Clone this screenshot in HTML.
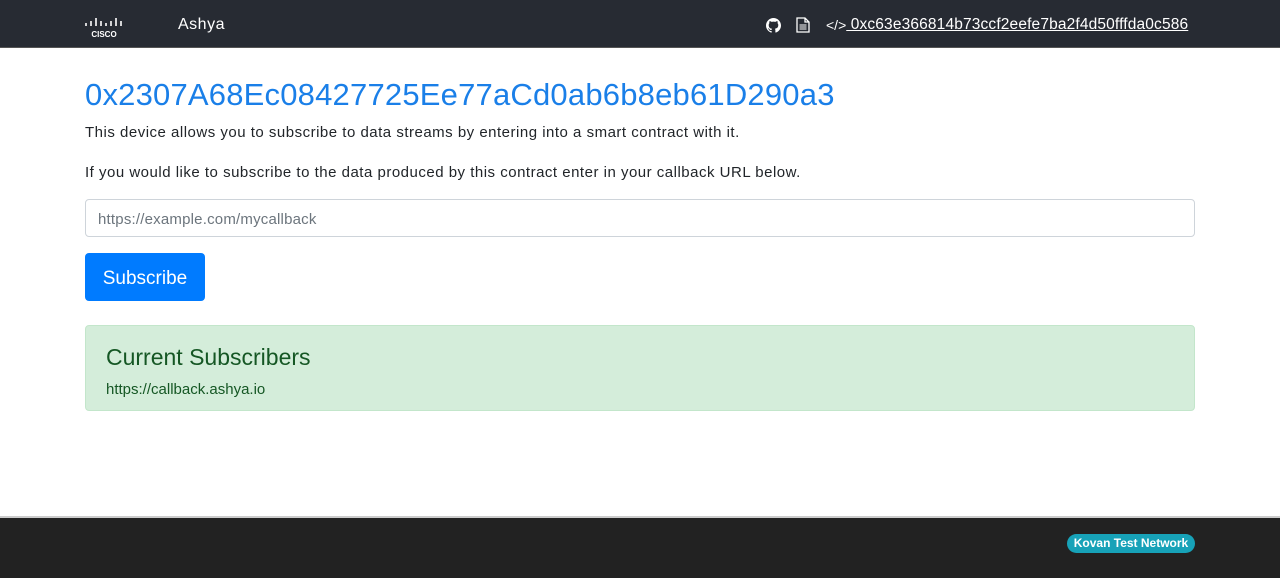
<!DOCTYPE html>
<html><head><meta charset="utf-8"><style>
*{box-sizing:border-box;margin:0;padding:0}
body{width:1280px;height:578px;overflow:hidden;font-family:"Liberation Sans",sans-serif;background:#fff;color:#212529;position:relative}
.nav{position:absolute;left:0;top:0;width:1280px;height:48px;background:#272b33;border-bottom:1px solid #555}
.brand{position:absolute;left:178px;top:16px;color:#fff;font-size:16px;letter-spacing:.5px}
.right{position:absolute;left:766px;top:16px;color:#fff;font-size:15.5px;display:flex;align-items:center}
h1{position:absolute;left:85px;top:77px;font-size:31px;font-weight:normal;color:#1a7fe8;letter-spacing:.2px}
p{position:absolute;left:85px;font-size:15px;color:#212529;letter-spacing:.5px}
.inp{position:absolute;left:85px;top:199px;width:1110px;height:38px;border:1px solid #ced4da;border-radius:4px;padding:11px 12px;font-size:15px;color:#6c757d;letter-spacing:.2px}
.btn{position:absolute;left:85px;top:253px;width:120px;height:48px;background:#007bff;border-radius:4px;color:#fff;font-size:19px;text-align:center;line-height:52px}
.alert{position:absolute;left:85px;top:325px;width:1110px;height:86px;background:#d4edda;border:1px solid #c3e6cb;border-radius:4px;color:#155724}
.alert h2{position:absolute;left:20px;top:18px;font-size:23px;font-weight:normal}
.alert div{position:absolute;left:20px;top:55px;font-size:15px}
.foot{position:absolute;left:0;top:516px;width:1280px;height:62px;background:#222;border-top:2px solid #ccc}
.badge{position:absolute;left:1067px;top:16px;width:128px;height:19px;background:#17a2b8;border-radius:10px;color:#fff;font-size:12px;font-weight:bold;text-align:center;line-height:19px}
</style></head><body>
<div class="nav">
 <svg style="position:absolute;left:85px;top:17px" width="38" height="22" viewBox="0 0 38 22">
  <g stroke="#fff" stroke-width="1.6">
   <line x1="1" y1="6" x2="1" y2="9"/><line x1="6" y1="4" x2="6" y2="9"/><line x1="11" y1="1" x2="11" y2="9"/><line x1="16" y1="4" x2="16" y2="9"/><line x1="21" y1="6" x2="21" y2="9"/><line x1="26" y1="4" x2="26" y2="9"/><line x1="31" y1="1" x2="31" y2="9"/><line x1="36" y1="4" x2="36" y2="9"/>
  </g>
  <text x="19" y="20" fill="#fff" font-size="8" font-weight="bold" text-anchor="middle" font-family="Liberation Sans">CISCO</text>
 </svg>
 <div class="brand">Ashya</div>
 <div class="right">
  <svg width="15" height="15" viewBox="0 0 16 16"><path fill="#fff" d="M8 0C3.6 0 0 3.6 0 8c0 3.5 2.3 6.5 5.5 7.6.4.1.5-.2.5-.4v-1.4c-2.2.5-2.7-1-2.7-1-.4-.9-.9-1.2-.9-1.200-.7-.5.1-.5.1-.5.8.1 1.2.8 1.2.8.7 1.3 1.9.9 2.3.7.1-.5.3-.9.5-1.1-1.800-.2-3.600-.9-3.600-4 0-.9.3-1.6.8-2.1-.1-.2-.4-1 .1-2.1 0 0 .7-.2 2.200.8.6-.2 1.300-.3 2-.3s1.400.1 2 .3c1.500-1 2.200-.8 2.200-.8.4 1.1.2 1.900.1 2.100.5.6.8 1.300.8 2.100 0 3.100-1.900 3.700-3.600 3.900.3.3.5.8.5 1.500v2.200c0 .2.1.5.6.4C13.700 14.500 16 11.500 16 8c0-4.400-3.600-8-8-8z"/></svg>
  <svg style="margin-left:15px" width="14" height="16" viewBox="0 0 14 16"><path fill="none" stroke="#fff" stroke-width="1.3" d="M1 1h8l4 4v10H1z M9 1v4h4"/><path stroke="#fff" d="M3.5 8h7M3.5 10h7M3.5 12h7"/></svg>
  <span style="margin-left:16px;font-size:14px">&lt;/&gt;</span><span style="text-decoration:underline;letter-spacing:.15px">&nbsp;0xc63e366814b73ccf2eefe7ba2f4d50fffda0c586</span>
 </div>
</div>
<h1>0x2307A68Ec08427725Ee77aCd0ab6b8eb61D290a3</h1>
<p style="top:124px">This device allows you to subscribe to data streams by entering into a smart contract with it.</p>
<p style="top:164px">If you would like to subscribe to the data produced by this contract enter in your callback URL below.</p>
<div class="inp">https://example.com/mycallback</div>
<div class="btn">Subscribe</div>
<div class="alert"><h2>Current Subscribers</h2><div>https://callback.ashya.io</div></div>
<div class="foot"><div class="badge">Kovan Test Network</div></div>
</body></html>
